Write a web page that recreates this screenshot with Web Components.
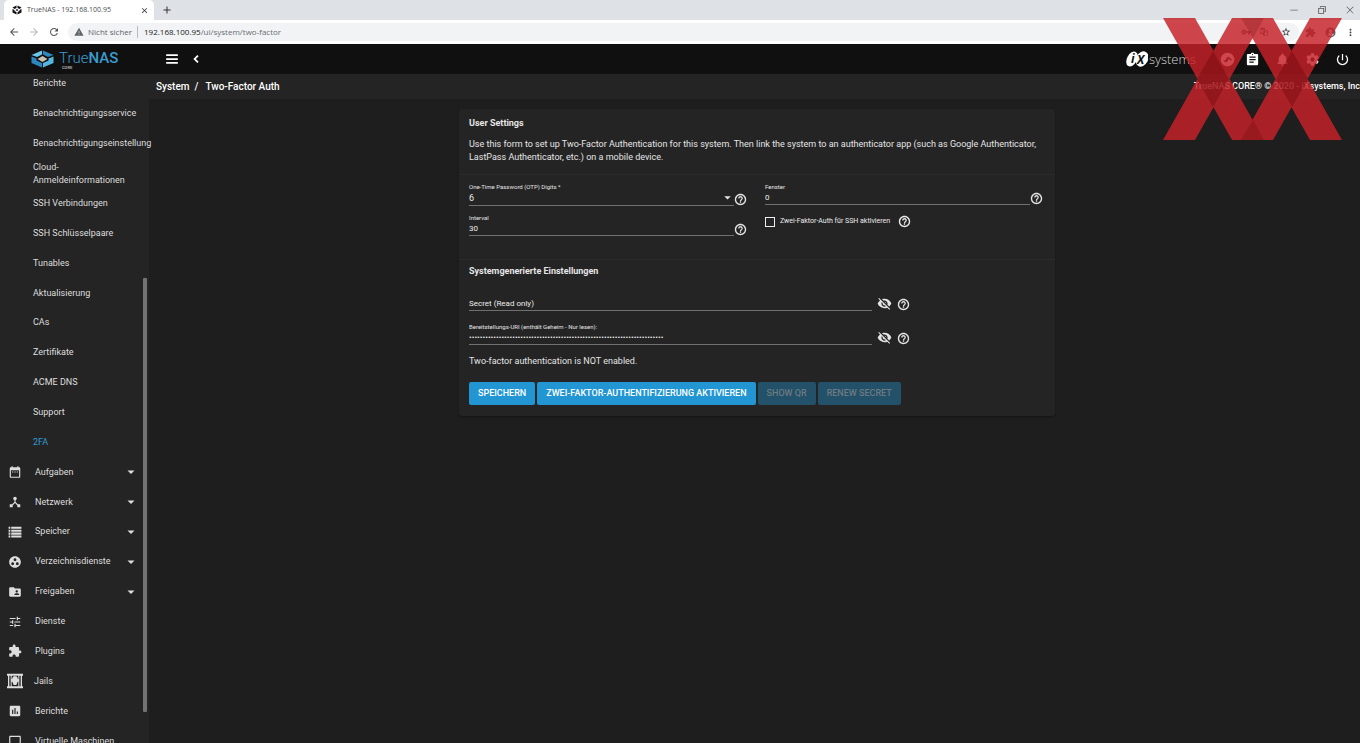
<!DOCTYPE html>
<html lang="de">
<head>
<meta charset="utf-8">
<title>TrueNAS - 192.168.100.95</title>
<style>
html, body { margin: 0; height: 100%; }
body { background: #1e1e1e; color: #e4e4e4; font: 9px/13px Roboto, "Liberation Sans", sans-serif; overflow: hidden; }
</style>
</head>
<body>
<nas-page></nas-page>
<script>
const PATHS = {
  menu: 'M2 4h20v3H2zM2 10.500h20v3H2zM2 17h20v3H2z',
  chevron: 'M15.900 7.900L14 6l-6 6 6 6 1.900-1.900L11.800 12z',
  help: 'M10.800 18.200h2.400v-2.400h-2.400v2.400zM12 1.500C6.200 1.500 1.500 6.200 1.500 12S6.200 22.500 12 22.500 22.500 17.800 22.500 12 17.800 1.500 12 1.500zm0 18.500c-4.410 0-8-3.590-8-8s3.590-8 8-8 8 3.590 8 8-3.590 8-8 8zm0-14.300c-2.400 0-4.300 1.900-4.300 4.300h2.400c0-1.100.8-1.900 1.900-1.900s1.900.8 1.900 1.900c0 2-3.100 1.750-3.100 5h2.400c0-2.250 3.100-2.500 3.100-5 0-2.400-1.900-4.300-4.300-4.300z',
  eyeoff: 'M12 7c2.760 0 5 2.240 5 5 0 .65-.13 1.260-.36 1.830l2.920 2.920c1.510-1.260 2.700-2.890 3.430-4.750-1.730-4.390-6-7.500-11-7.500-1.400 0-2.740.25-3.980.7l2.160 2.160C10.740 7.130 11.350 7 12 7zM2 4.270l2.280 2.280.46.46C3.080 8.300 1.780 10.020 1 12c1.730 4.390 6 7.500 11 7.500 1.550 0 3.030-.3 4.380-.84l.42.42L19.730 22 21 20.730 3.270 3 2 4.270zM7.530 9.800l1.550 1.550c-.05.21-.08.43-.08.65 0 1.660 1.340 3 3 3 .22 0 .44-.03.65-.08l1.550 1.550c-.67.33-1.410.53-2.200.53-2.760 0-5-2.240-5-5 0-.79.2-1.530.53-2.200zm4.310-.78l3.150 3.150.02-.16c0-1.660-1.340-3-3-3l-.17.01z',
  down: 'M6 9.500l6 6 6-6z',
  calendar: 'M9 11H7v2h2v-2zm4 0h-2v2h2v-2zm4 0h-2v2h2v-2zm2-7h-1V2h-2v2H8V2H6v2H5c-1.110 0-1.990.9-1.990 2L3 20c0 1.100.89 2 2 2h14c1.100 0 2-.9 2-2V6c0-1.100-.9-2-2-2zm0 16H5V9h14v11z',
  hub: 'M17 16l-4-4V8.820C14.160 8.400 15 7.300 15 6c0-1.660-1.340-3-3-3S9 4.340 9 6c0 1.300.84 2.400 2 2.820V12l-4 4H3v5h5v-3.050l4-4.200 4 4.200V21h5v-5h-4z',
  storage: 'M1 3h3v3.500H1zM5.500 3H23v3.500H5.500zM1 8h3v3.500H1zM5.500 8H23v3.500H5.500zM1 13h3v3.500H1zM5.500 13H23v3.500H5.500zM1 18h3v3.500H1zM5.500 18H23v3.500H5.500z',
  groupwork: 'M12 2C6.480 2 2 6.480 2 12s4.480 10 10 10 10-4.480 10-10S17.520 2 12 2zM8 17.500c-1.380 0-2.500-1.120-2.500-2.500s1.120-2.500 2.500-2.500 2.500 1.120 2.500 2.500-1.120 2.500-2.500 2.500zM9.500 8c0-1.380 1.120-2.500 2.500-2.500s2.500 1.120 2.500 2.500-1.120 2.500-2.500 2.500S9.500 9.380 9.500 8zm6.500 9.500c-1.380 0-2.500-1.120-2.500-2.500s1.120-2.500 2.500-2.500 2.500 1.120 2.500 2.500-1.120 2.500-2.500 2.500z',
  folder: 'M20 6h-8l-2-2H4c-1.100 0-1.990.9-1.990 2L2 18c0 1.100.9 2 2 2h16c1.100 0 2-.9 2-2V8c0-1.100-.9-2-2-2zm-5 3c1.100 0 2 .9 2 2s-.9 2-2 2-2-.9-2-2 .9-2 2-2zm4 8h-8v-1c0-1.330 2.670-2 4-2s4 .67 4 2v1z',
  tune: 'M3 17v2h6v-2H3zM3 5v2h10V5H3zm10 16v-2h8v-2h-8v-2h-2v6h2zM7 9v2H3v2h4v2h2V9H7zm14 4v-2H11v2h10zm-6-4h2V7h4V5h-4V3h-2v6z',
  puzzle: 'M20.500 11H19V7c0-1.100-.9-2-2-2h-4V3.500C13 2.120 11.880 1 10.500 1S8 2.120 8 3.500V5H4c-1.100 0-1.990.9-1.990 2v3.800H3.500c1.490 0 2.700 1.210 2.700 2.700s-1.210 2.700-2.700 2.700H2V20c0 1.100.9 2 2 2h3.800v-1.500c0-1.490 1.210-2.700 2.700-2.700 1.490 0 2.700 1.210 2.700 2.700V22H17c1.100 0 2-.9 2-2v-4h1.500c1.380 0 2.500-1.120 2.500-2.500S21.880 11 20.500 11z',
  jail: 'M0 1h24v3H0zM0 20h24v3H0zM1.500 4h2v16h-2zM5.500 4h1.500v16H5.500zM17 4h1.500v16H17zM20.500 4h2v16h-2zM8 7l2-2h4l2 2v2h1v4h-1l-2 5h-4l-2-5H7V9h1z',
  chart: 'M19 3H5c-1.100 0-2 .9-2 2v14c0 1.100.9 2 2 2h14c1.100 0 2-.9 2-2V5c0-1.100-.9-2-2-2zM9 17H7v-7h2v7zm4 0h-2V7h2v10zm4 0h-2v-4h2v4z',
  laptop: 'M20 18c1.100 0 2-.9 2-2V5c0-1.100-.9-2-2-2H4c-1.100 0-2 .9-2 2v11c0 1.100.9 2 2 2H0v2h24v-2h-4zM4 5h16v11H4V5z',
  clipboard: 'M19 3h-4.180C14.400 1.840 13.300 1 12 1c-1.300 0-2.400.84-2.820 2H5c-1.100 0-2 .9-2 2v14c0 1.100.9 2 2 2h14c1.100 0 2-.9 2-2V5c0-1.100-.9-2-2-2zm-7 0c.55 0 1 .45 1 1s-.45 1-1 1-1-.45-1-1 .45-1 1-1zm2 14H7v-2h7v2zm3-4H7v-2h10v2zm0-4H7V7h10v2z',
  bell: 'M12 22c1.100 0 2-.9 2-2h-4c0 1.100.89 2 2 2zm6-6v-5c0-3.070-1.640-5.640-4.500-6.320V4c0-.83-.67-1.500-1.500-1.500s-1.500.67-1.500 1.500v.68C7.630 5.360 6 7.920 6 11v5l-2 2v1h16v-1l-2-2z',
  gear: 'M19.430 12.980c.04-.32.07-.64.07-.98s-.03-.66-.07-.98l2.110-1.650c.19-.15.24-.42.12-.64l-2-3.460c-.12-.22-.39-.3-.61-.22l-2.490 1c-.52-.4-1.080-.73-1.690-.98l-.38-2.650C14.460 2.180 14.250 2 14 2h-4c-.25 0-.46.18-.49.42l-.38 2.650c-.61.25-1.170.59-1.690.98l-2.490-1c-.23-.09-.49 0-.61.22l-2 3.460c-.13.22-.07.49.12.64l2.110 1.650c-.04.32-.07.65-.07.98s.03.66.07.98l-2.110 1.650c-.19.15-.24.42-.12.64l2 3.460c.12.22.39.3.61.22l2.490-1c.52.4 1.080.73 1.690.98l.38 2.650c.03.24.24.42.49.42h4c.25 0 .46-.18.49-.42l.38-2.650c.61-.25 1.170-.59 1.690-.98l2.490 1c.23.09.49 0 .61-.22l2-3.460c.12-.22.07-.49-.12-.64l-2.110-1.650zM12 15.500c-1.930 0-3.500-1.570-3.500-3.500s1.570-3.500 3.500-3.500 3.500 1.570 3.500 3.500-1.570 3.500-3.500 3.500z',
  power: 'M13 3h-2v10h2V3zm4.830 2.170l-1.420 1.420C17.990 7.860 19 9.810 19 12c0 3.870-3.130 7-7 7s-7-3.130-7-7c0-2.190 1.010-4.140 2.580-5.420L6.170 5.170C4.230 6.820 3 9.260 3 12c0 4.970 4.030 9 9 9s9-4.030 9-9c0-2.740-1.230-5.180-3.170-6.830z',
  command: 'M12 1a11 11 0 1 0 0 22 11 11 0 0 0 0-22zM5 14c3 0 4-1 6-5l2-2 6 5-1 2-4-3-3 5H8z',
  back: 'M20 11H7.830l5.590-5.590L12 4l-8 8 8 8 1.410-1.410L7.830 13H20v-2z',
  forward: 'M12 4l-1.410 1.410L16.170 11H4v2h12.170l-5.580 5.590L12 20l8-8z',
  reload: 'M17.650 6.350C16.200 4.900 14.210 4 12 4c-4.420 0-7.990 3.580-7.990 8s3.570 8 7.990 8c3.730 0 6.840-2.550 7.730-6h-2.080c-.82 2.330-3.040 4-5.650 4-3.310 0-6-2.690-6-6s2.690-6 6-6c1.660 0 3.140.69 4.220 1.780L13 11h7V4l-2.350 2.350z',
  warning: 'M1 21h22L12 2 1 21zm12-3h-2v-2h2v2zm0-4h-2v-4h2v4z',
  star: 'M22 9.240l-7.190-.62L12 2 9.190 8.630 2 9.240l5.460 4.730L5.820 21 12 17.270 18.180 21l-1.630-7.030L22 9.240zM12 15.400l-3.760 2.270 1-4.280-3.320-2.880 4.380-.38L12 6.100l1.710 4.040 4.380.38-3.320 2.880 1 4.280L12 15.400z',
  dots: 'M12 8c1.100 0 2-.9 2-2s-.9-2-2-2-2 .9-2 2 .9 2 2 2zm0 2c-1.100 0-2 .9-2 2s.9 2 2 2 2-.9 2-2-.9-2-2-2zm0 6c-1.100 0-2 .9-2 2s.9 2 2 2 2-.9 2-2-.9-2-2-2z',
  key: 'M12.650 10C11.830 7.670 9.610 6 7 6c-3.310 0-6 2.690-6 6s2.690 6 6 6c2.610 0 4.830-1.670 5.650-4H17v4h4v-4h2v-4H12.650zM7 14c-1.100 0-2-.9-2-2s.9-2 2-2 2 .9 2 2-.9 2-2 2z',
  translate: 'M3 2h10l2 5h6v14H11l-2-4H3zM8 6a4 4 0 1 0 3.800 5H8v-2h6v-1zM13 18l2 2h4V9h-3z',
  person: 'M12 1a11 11 0 1 0 0 22 11 11 0 0 0 0-22zm0 4a4 4 0 1 1 0 8 4 4 0 0 1 0-8zm0 15c-3 0-5-1-7-4 1-2 5-3 7-3s6 1 7 3c-2 3-4 4-7 4z',
  close: 'M19 6.410L17.590 5 12 10.590 6.410 5 5 6.410 10.590 12 5 17.590 6.410 19 12 13.410 17.590 19 19 17.590 13.410 12z',
  plus: 'M20.500 13.200h-7.300v7.300h-2.400v-7.300H3.500v-2.400h7.300V3.500h2.400v7.300h7.300z',
  minimize: 'M3 11.500h18v1.500H3z',
  restore: 'M3 7h14v14H3zM5 9v10h10V9zM7 3h14v14h-3v-2h1V5H9v1H7z',
  thinclose: 'M20.500 4.500l-1-1L12 11 4.500 3.500l-1 1L11 12l-7.500 7.500 1 1L12 13l7.500 7.500 1-1L13 12z'
};

function define(name, html, setup) {
  const template = document.createElement('template');
  template.innerHTML = html;
  customElements.define(name, class extends HTMLElement {
    constructor() {
      super();
      this.attachShadow({ mode: 'open' }).append(template.content.cloneNode(true));
    }
    connectedCallback() { if (setup) setup(this, this.shadowRoot); }
  });
}

define('ui-icon', `
<style>:host{display:block;flex:none;width:var(--size,12px);height:var(--size,12px)}svg{display:block;width:100%;height:100%;fill:currentColor}</style>
<svg viewBox="0 0 24 24" aria-hidden="true"><path fill-rule="evenodd"/></svg>`,
(el, root) => root.querySelector('path').setAttribute('d', PATHS[el.getAttribute('name')]));

define('icon-button', `
<style>
:host{display:block;flex:none}
button{display:flex;align-items:center;justify-content:center;width:100%;height:100%;padding:0;border:0;background:none;color:inherit}
</style>
<button type="button"></button>`,
(el, root) => {
  const b = root.querySelector('button');
  b.setAttribute('aria-label', el.getAttribute('label'));
  b.innerHTML = '<ui-icon name="' + el.getAttribute('name') + '"></ui-icon>';
});

define('browser-chrome', `
<style>
:host{display:block;font:8px/12px "Open Sans","Noto Sans",sans-serif;color:#5f6368;background:#fff}
.strip{display:flex;align-items:center;height:20px;background:#dee1e6;padding-left:4px}
.tab{display:flex;align-items:center;gap:5px;width:137px;height:20px;padding:0 5px 0 8px;background:#fff;border-radius:5px 5px 0 0;color:#4a4d51;font-size:7px;box-sizing:content-box}
.tab svg{width:10px;height:10px}
.tab span{flex:1}
.tab icon-button{--size:9px;color:#333;width:10px;height:10px}
.new{--size:10px;margin-left:8px;color:#333}
.win{display:flex;gap:18px;margin-left:auto;padding-right:5px;--size:10px;color:#555}
.bar{display:flex;align-items:center;height:24px;padding:0 4px 0 8px}
.nav{display:flex;gap:8px;--size:12px;color:#555}
.nav .off{color:#bbb}
.url{display:flex;align-items:center;flex:1;height:18px;margin-left:8px;padding:0 8px 0 6px;border-radius:9px;background:#f1f3f4}
.url>ui-icon{--size:10px;margin-right:4px}
.url>span{padding-right:5px;border-right:1px solid #bbb;margin-right:6px}
.url a{color:#6a6d72;text-decoration:none}
.url b{font-weight:400;color:#202124}
.right{display:flex;align-items:center;gap:8px;--size:10px;margin-left:auto}
.right icon-button{margin-left:4px;color:#333}
.ext{display:flex;align-items:center;gap:9px;--size:11px;margin-left:6px}
.ext icon-button:last-child{color:#444}
</style>
<div class="strip">
  <div class="tab">
    <svg viewBox="0 0 20 20" fill="#111"><path d="M9 1v5L5 8 1 5zM11 1l8 4-4 3-4-2zM1 8l4 2v2l4 2v5l-8-4zM19 8l-4 2v2l-4 2v5l8-4zM10 8l3 2-3 2-3-2z"/></svg>
    <span>TrueNAS - 192.168.100.95</span><icon-button name="close" label="Tab schließen"></icon-button>
  </div>
  <icon-button class="new" name="plus" label="Neuer Tab"></icon-button>
  <div class="win"><icon-button name="minimize" label="Minimieren"></icon-button><icon-button name="restore" label="Verkleinern"></icon-button><icon-button name="thinclose" label="Schließen"></icon-button></div>
</div>
<div class="bar">
  <div class="nav"><icon-button name="back" label="Zurück"></icon-button><icon-button class="off" name="forward" label="Vorwärts"></icon-button><icon-button name="reload" label="Neu laden"></icon-button></div>
  <div class="url"><ui-icon name="warning"></ui-icon><span>Nicht sicher</span><a href="#"><b>192.168.100.95</b>/ui/system/two-factor</a>
    <div class="right"><ui-icon name="key"></ui-icon><ui-icon name="translate"></ui-icon><icon-button name="star" label="Lesezeichen"></icon-button></div>
  </div>
  <div class="ext"><ui-icon name="puzzle"></ui-icon><ui-icon name="person"></ui-icon><icon-button name="dots" label="Menü"></icon-button></div>
</div>`);

define('nas-logo', `
<style>
:host{display:flex;align-items:center;gap:5px;color:#3a9ccf}
svg{width:23px;height:18px;flex:none}
.word{display:block;font-size:15px;line-height:16px;font-weight:500;padding-top:2px}
.word i{font-style:normal;font-weight:300}
.core{display:block;font-size:4px;line-height:4px;font-weight:700;color:#aaa;padding-left:3px}
</style>
<svg viewBox="0 0 46 36"><path fill="#6dc5ea" d="M22 1v8l-10 5L1 10z"/><path fill="#2d86bd" d="M24 1l21 9-11 4-10-5z"/><path fill="#2d86bd" d="M1 13l10 4v4l11 5v9L1 26z"/><path fill="#55b6e2" d="M45 13l-10 4v4l-11 5v9l21-9z"/><path fill="#c9c2b4" d="M23 12l10 6-10 6-10-6z"/></svg>
<div><span class="word"><i>True</i>NAS</span><span class="core">CORE</span></div>`);

define('ix-logo', `
<style>
:host{display:flex;align-items:center;gap:1px;color:#d6d6d6;font:300 13px/16px "Open Sans",sans-serif}
svg{width:22px;height:18px;flex:none}
text{font:italic 700 12px "Open Sans",sans-serif;fill:#111}
</style>
<svg viewBox="0 0 22 18"><g fill="#fff"><ellipse cx="6" cy="9" rx="5" ry="8" transform="rotate(28 6 9)"/><ellipse cx="16" cy="9" rx="6" ry="8" transform="rotate(28 16 9)"/></g><text x="5" y="13">i</text><text x="11" y="14">X</text></svg><span>systems</span>`);

define('app-header', `
<style>
:host{display:flex;align-items:center;height:30px;background:#101010;color:#fff}
nas-logo{width:132px;padding-left:31px}
.menu{--size:14px;width:17px;height:20px}
.collapse{--size:16px;width:16px;height:20px;margin-left:8px}
ix-logo{margin-left:auto}
.actions{display:flex;align-items:center;--size:15px;padding-left:16px;padding-right:10px}
.actions icon-button{width:30px;height:20px}
.actions icon-button:nth-child(2){width:20px}
.actions icon-button:nth-child(3){width:40px}
.actions icon-button:nth-child(4){width:20px}
.actions icon-button:nth-child(5){width:40px;margin-right:-12px}
</style>
<nas-logo></nas-logo>
<icon-button class="menu" name="menu" label="Menü"></icon-button>
<icon-button class="collapse" name="chevron" label="Seitenleiste einklappen"></icon-button>
<ix-logo></ix-logo>
<div class="actions"><icon-button name="command" label="TrueCommand"></icon-button><icon-button name="clipboard" label="Aufgaben"></icon-button><icon-button name="bell" label="Meldungen"></icon-button><icon-button name="gear" label="Einstellungen"></icon-button><icon-button name="power" label="Energie"></icon-button></div>`);

define('nav-item', `
<style>
:host{display:block}
a{display:flex;align-items:center;height:100%;box-sizing:border-box;padding:0 12px 0 33px;color:inherit;text-decoration:none}
span{flex:1;min-width:0}
:host([icon]) a{padding-left:8px}
:host([icon]) span{padding-left:13px}
:host([active]){color:#2f9bd3}
ui-icon{--size:14px}
ui-icon.wide{--size:16px;margin:0 -2px 0 -1px}
ui-icon.caret{--size:14px;margin-right:-1px}
</style>
<a href="#"><span><slot></slot></span></a>`,
(el, root) => {
  const a = root.querySelector('a'), icon = el.getAttribute('icon');
  if (icon) a.insertAdjacentHTML('afterbegin', '<ui-icon ' + (icon === 'jail' ? 'class="wide" ' : '') + 'name="' + icon + '"></ui-icon>');
  if (el.hasAttribute('expandable')) a.insertAdjacentHTML('beforeend', '<ui-icon class="caret" name="down"></ui-icon>');
  if (el.hasAttribute('active')) a.setAttribute('aria-current', 'page');
});

define('app-sidebar', `
<style>
:host{display:block;position:relative;z-index:1;width:149px;background:#242424;color:#dedede;overflow-y:clip;overflow-x:visible}
nav{display:grid;grid-template-columns:minmax(0,1fr);grid-auto-rows:1fr;height:687px;margin-top:-5px}
.thumb{position:absolute;right:2px;top:204px;bottom:31px;width:4px;background:#737373;border-radius:1px}
</style>
<nav>
<nav-item>Berichte</nav-item><nav-item>Benachrichtigungsservice</nav-item><nav-item>Benachrichtigungseinstellung</nav-item>
<nav-item>Cloud-Anmeldeinformationen</nav-item><nav-item>SSH Verbindungen</nav-item><nav-item>SSH Schlüsselpaare</nav-item>
<nav-item>Tunables</nav-item><nav-item>Aktualisierung</nav-item><nav-item>CAs</nav-item><nav-item>Zertifikate</nav-item>
<nav-item>ACME DNS</nav-item><nav-item>Support</nav-item><nav-item active>2FA</nav-item>
<nav-item icon="calendar" expandable>Aufgaben</nav-item><nav-item icon="hub" expandable>Netzwerk</nav-item>
<nav-item icon="storage" expandable>Speicher</nav-item><nav-item icon="groupwork" expandable>Verzeichnisdienste</nav-item>
<nav-item icon="folder" expandable>Freigaben</nav-item><nav-item icon="tune">Dienste</nav-item><nav-item icon="puzzle">Plugins</nav-item>
<nav-item icon="jail">Jails</nav-item><nav-item icon="chart">Berichte</nav-item><nav-item icon="laptop">Virtuelle Maschinen</nav-item>
</nav>
<div class="thumb"></div>`);

define('page-breadcrumb', `
<style>
:host{display:flex;align-items:center;justify-content:space-between;height:25px;padding-left:7px;background:#242424;color:#fff;font-weight:500}
nav{font-size:10px}
a{color:inherit;text-decoration:none}
i{font-style:normal;padding:0 7px 0 5px}
span{font-size:9px}
</style>
<nav><a href="#">System</a><i>/</i><a href="#">Two-Factor Auth</a></nav>
<span>TrueNAS CORE® © 2020 - iXsystems, Inc</span>`);

define('form-field', `
<style>
:host{display:flex;align-items:flex-end}
.box{flex:1;min-width:0;position:relative}
label{display:block;font-size:6px;line-height:8px}
input,select{display:block;box-sizing:border-box;width:100%;height:14px;margin:0;padding:0;border:0;border-bottom:1px solid #707070;border-radius:0;background:none;color:#ececec;font:8px/12px Roboto,sans-serif;outline:0;appearance:none}
input::placeholder{color:#ececec;opacity:1}
select{height:15px;font-size:9px}
.arrow{position:absolute;right:0;bottom:2px;--size:13px;pointer-events:none}
icon-button{--size:13px}
:host([wide]) .box{flex:0 0 70%}
:host([wide]) icon-button{--size:13px;margin-left:5px}
:host([wide]) .eye{--size:15px}
</style>
<div class="box"></div>`,
(el, root) => {
  const label = el.getAttribute('label'), type = el.getAttribute('type'), value = el.getAttribute('value') || '';
  const box = root.querySelector('.box');
  if (type === 'select') {
    box.innerHTML = '<label for="c">' + label + '</label><select id="c"><option>' + value + '</option><option>7</option><option>8</option></select><ui-icon class="arrow" name="down"></ui-icon>';
  } else if (type === 'secret') {
    box.innerHTML = '<input id="c" type="password" readonly aria-label="' + label + '" placeholder="' + label + '">';
  } else {
    box.innerHTML = '<label for="c">' + label + '</label><input id="c" type="' + (type || 'text') + '" value="' + value + '"' + (type === 'password' ? ' readonly' : '') + '>';
  }
  if (el.hasAttribute('wide')) box.insertAdjacentHTML('afterend', '<icon-button class="eye" name="eyeoff" label="Anzeigen"></icon-button>');
  root.lastElementChild.insertAdjacentHTML('afterend', '<icon-button name="help" label="Hilfe"></icon-button>');
});

define('check-field', `
<style>
:host{display:flex;align-items:center;gap:8px;font-size:7px;height:13px;color:#ececec}
label{display:flex;align-items:center;gap:5px}
input{appearance:none;width:10px;height:10px;margin:0;border:1px solid #eee;box-sizing:border-box}
icon-button{--size:13px}
</style>
<label><input type="checkbox"><span><slot></slot></span></label><icon-button name="help" label="Hilfe"></icon-button>`);

define('action-button', `
<style>
:host{display:block}
button{height:23px;padding:0 9px;border:0;border-radius:2px;background:#2196d3;color:#fff;font:500 9px/13px Roboto,sans-serif;text-transform:uppercase}
button:disabled{background:#225169;color:#6d7a82}
</style>
<button type="button"><slot></slot></button>`,
(el, root) => { root.querySelector('button').disabled = el.hasAttribute('disabled'); });

define('settings-card', `
<style>
:host{display:block;width:100%;max-width:596px;box-sizing:border-box;background:#242424;border-radius:3px;box-shadow:0 1px 2px #151515}
section{padding:8px 10px 10px}
section+section{border-top:1px solid #2b2b2b}
h2{margin:0;font-size:9px;line-height:13px;font-weight:700;color:#e6e6e6}
p{margin:0}
.intro p{margin-top:8px}
.fields{display:grid;grid-template-columns:1fr 1fr;gap:18px;padding:8px 12px 23px 10px}
.col{display:flex;flex-direction:column;gap:8px}
.col check-field{margin-top:2px}
.generated{padding:5px 10px 11px}
.generated form-field{margin-top:12px}
.generated h2+form-field{margin-top:18px}
.generated p{margin-top:10px}
.buttons{display:flex;gap:2px;margin-top:14px}
</style>
<section class="intro"><h2>User Settings</h2><p>Use this form to set up Two-Factor Authentication for this system. Then link the system to an authenticator app (such as Google Authenticator, LastPass Authenticator, etc.) on a mobile device.</p></section>
<section class="fields">
  <div class="col"><form-field type="select" label="One-Time Password (OTP) Digits *" value="6"></form-field><form-field label="Interval" value="30"></form-field></div>
  <div class="col"><form-field label="Fenster" value="0"></form-field><check-field>Zwei-Faktor-Auth für SSH aktivieren</check-field></div>
</section>
<section class="generated"><h2>Systemgenerierte Einstellungen</h2>
  <form-field wide type="secret" label="Secret (Read only)"></form-field>
  <form-field wide type="password" label="Bereitstellungs-URI (enthält Geheim - Nur lesen):" value="otpauth://totp/iXsystems:truenas.local?secret=ABCDEFGHIJKLMNOP&issuer=iX"></form-field>
  <p>Two-factor authentication is NOT enabled.</p>
  <div class="buttons"><action-button>Speichern</action-button><action-button>Zwei-Faktor-Authentifizierung aktivieren</action-button><action-button disabled>Show QR</action-button><action-button disabled>Renew Secret</action-button></div>
</section>`);

define('corner-mark', `
<style>:host{display:block;position:absolute;z-index:2;top:18px;right:18px;pointer-events:none}svg{display:block;width:179px;height:122px}</style>
<svg viewBox="0 0 179 122" aria-hidden="true">
<g opacity=".83" fill="#c52128"><path d="M0 0H32L101 122H69ZM69 0H101L32 122H0ZM78 0H110L179 122H147ZM147 0H179L110 122H78Z"/></g>
<path fill="#500" fill-opacity=".28" d="M50 33L66 61L50 89L34 61ZM129 33L145 61L129 89L113 61Z"/><path fill="#500" fill-opacity=".2" d="M78 0H101L90 20ZM78 122H101L90 102Z"/></svg>`);

define('nas-page', `
<style>
:host{display:grid;grid-template-rows:auto auto minmax(0,1fr);height:100vh;position:relative}
.body{display:grid;grid-template-columns:auto 1fr;grid-template-rows:minmax(0,1fr)}
main{min-width:0}
.content{display:flex;justify-content:center;padding:10px 0 0 5px}
</style>
<browser-chrome></browser-chrome><app-header></app-header>
<div class="body"><app-sidebar></app-sidebar><main><page-breadcrumb></page-breadcrumb><div class="content"><settings-card></settings-card></div></main></div>
<corner-mark></corner-mark>`);
</script>
</body>
</html>
